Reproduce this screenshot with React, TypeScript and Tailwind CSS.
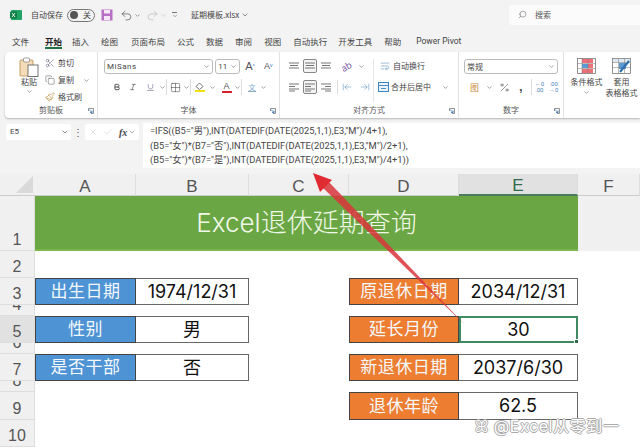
import React from "react";
import {
  Bold, Italic, Underline, ChevronDown, Undo2, Redo2, Scissors, Copy, Paintbrush, Search, X, Check,
  Grid2x2, Percent, WrapText, ArrowDownToLine,
} from "lucide-react";

const cjk = "font-['Noto_Sans_CJK_SC','Noto_Sans',sans-serif]";

const Chev = ({ className = "" }: { className?: string }) => (
  <ChevronDown size={7} strokeWidth={2} className={`text-[#666] shrink-0 ${className}`} />
);

const Launcher = () => (
  <svg width="6" height="6" viewBox="0 0 6 6" className="absolute right-[3px] bottom-[4px]">
    <path d="M.5 3V.5H5.500V5.500H3" fill="none" stroke="#777" strokeWidth=".8" />
    <path d="M1 1.500L4 4.500M4 2.500V4.500H2" fill="none" stroke="#2a6cb0" strokeWidth=".8" />
  </svg>
);

const Lines = ({ boxed = false, kind = 0 }: { boxed?: boolean; kind?: number }) => (
  <span className={`flex items-center justify-center w-[14px] h-[14px] shrink-0 ${boxed ? "border border-[#888] rounded-[2px] bg-[#f4f4f4]" : ""}`}>
    <svg width="10" height="10" viewBox="0 0 10 10">
      <path
        d={kind === 1 ? "M0 2H10M0 4.500H6M0 7H10M0 9H6" : kind === 2 ? "M0 2H10M4 4.500H10M0 7H10M4 9H10" : "M0 2H10M1 4.500H9M0 7H10"}
        stroke="#666"
        strokeWidth=".9"
      />
    </svg>
  </span>
);

const GroupLabel = ({ children }: { children: React.ReactNode }) => (
  <div className="absolute left-0 right-0 bottom-[2px] h-[12px] text-center text-[8px] leading-[12px] text-[#555]">{children}</div>
);

const Divider = () => <div className="w-px h-[16px] bg-[#ddd] shrink-0" />;

const Clipboard = () => (
  <div className="relative w-[93px] h-full shrink-0 border-r border-[#e2e2e2] flex pl-[12px] pt-[5px]">
    <div className="flex flex-col items-center w-[24px]">
      <svg width="20" height="20" viewBox="0 0 20 20">
        <rect x="1" y="3" width="13" height="16" rx="1" fill="#f4dcb8" stroke="#b98a4a" strokeWidth=".8" />
        <rect x="4.500" y="1" width="6" height="4" rx="1" fill="#fff" stroke="#888" strokeWidth=".8" />
        <rect x="9" y="8" width="10" height="11.500" fill="#fff" stroke="#666" strokeWidth=".9" />
      </svg>
      <div className="text-[8px] leading-[10px] text-[#444]">粘贴</div>
      <Chev className="mt-[1px]" />
    </div>
    <div className="flex flex-col ml-[4px] gap-[5px] text-[8px] leading-[12px] text-[#444]">
      <div className="flex items-center gap-[3px] h-[12px]"><Scissors size={10} className="text-[#557]" strokeWidth={1.200} />剪切</div>
      <div className="flex items-center gap-[3px] h-[12px]"><Copy size={10} className="text-[#555]" strokeWidth={1.200} />复制<Chev className="ml-[6px]" /></div>
      <div className="flex items-center gap-[3px] h-[12px]"><Paintbrush size={10} className="text-[#b9862f]" strokeWidth={1.400} />格式刷</div>
    </div>
    <GroupLabel>剪贴板</GroupLabel>
    <Launcher />
  </div>
);

const FontGroup = () => (
  <div className="relative w-[182px] h-full shrink-0 border-r border-[#e2e2e2] pl-[6px] pt-[7px]">
    <div className="flex items-center h-[15px] gap-[2px]">
      <div className="w-[110px] h-[15px] border border-[#bbb] rounded-[3px] flex items-center justify-between px-[2px] text-[8px] text-[#444] font-['Roboto',sans-serif] tracking-[0.5px]">MiSans<Chev /></div>
      <div className="w-[25px] h-[15px] border border-[#bbb] rounded-[3px] flex items-center justify-between px-[2px] text-[8px] text-[#444] font-['Roboto',sans-serif]">11<Chev /></div>
      <span className="ml-[3px] w-[15px] text-[11px] leading-none text-[#555] font-['Liberation_Sans',sans-serif]">A<sup className="text-[5px] text-[#2a6cb0]">^</sup></span>
      <span className="ml-[2px] w-[15px] text-[9px] leading-none text-[#555] font-['Liberation_Sans',sans-serif]">A<sup className="text-[5px] text-[#2a6cb0]">v</sup></span>
    </div>
    <div className="flex items-center h-[16px] mt-[5px] pl-[9px] text-[#555]">
      <Bold size={8} strokeWidth={3} />
      <Italic size={8} strokeWidth={2} className="ml-[8px]" />
      <span className="ml-[9px] flex items-center"><Underline size={9} strokeWidth={1.500} className="text-[#668]" /></span>
      <Chev className="ml-[4px]" />
      <Divider />
      <Grid2x2 size={11} strokeWidth={1.200} className="ml-[3px] text-[#444]" />
      <Chev className="ml-[2px]" />
      <Divider />
      <span className="ml-[3px] flex flex-col items-center w-[11px]">
        <svg width="9" height="8" viewBox="0 0 9 8"><path d="M4.500 1L8 4.500 4.500 7.500 1 4.500Z" fill="none" stroke="#666" strokeWidth=".9" /></svg>
        <span className="w-[10px] h-[2px] bg-[#f4e000]" />
      </span>
      <Chev className="ml-[4px]" />
      <span className="ml-[5px] flex flex-col items-center w-[11px]">
        <span className="text-[9px] leading-[9px] text-[#555] font-['Liberation_Sans',sans-serif]">A</span>
        <span className="w-[10px] h-[2px] bg-[#d3202a]" />
      </span>
      <Chev className="ml-[2px]" />
      <Divider />
      <span className="ml-[5px] flex flex-col items-center w-[10px] text-[7px] leading-[8px] text-[#7aa9cf]">文<span className="w-[8px] h-px bg-[#8ab]" /></span>
      <Chev className="ml-[3px]" />
    </div>
    <GroupLabel>字体</GroupLabel>
    <Launcher />
  </div>
);

const AlignGroup = () => (
  <div className="relative w-[179px] h-full shrink-0 border-r border-[#e2e2e2] pl-[7px] pt-[7px] flex">
    <div className="flex flex-col gap-[7px] w-[87px] border-r border-[#e6e6e6] h-[43px]">
      <div className="flex items-center gap-[2px] h-[14px]">
        <Lines /><Lines boxed /><Lines />
        <span className="ml-[6px] text-[9px] leading-none text-[#7a5aa6] rotate-[-30deg]">ab</span>
        <Chev className="ml-[4px]" />
      </div>
      <div className="flex items-center gap-[2px] h-[14px]">
        <Lines kind={1} /><Lines kind={1} boxed /><Lines kind={2} />
        <span className="w-px h-[14px] bg-[#ddd] mx-[2px]" />
        <ArrowDownToLine size={10} className="text-[#4c86b8] rotate-90" strokeWidth={1.200} />
        <span className="w-[4px]" />
        <ArrowDownToLine size={10} className="text-[#4c86b8] -rotate-90" strokeWidth={1.200} />
      </div>
    </div>
    <div className="flex flex-col gap-[7px] pl-[4px] text-[8px] text-[#444]">
      <div className="flex items-center gap-[3px] h-[14px]"><WrapText size={10} className="text-[#4c86b8] ml-[2px]" strokeWidth={1.300} />自动换行</div>
      <div className="flex items-center gap-[1px] h-[14px]">
        <svg width="11" height="10" viewBox="0 0 11 10"><rect x=".5" y=".5" width="10" height="9" fill="#eaf3fb" stroke="#3d85c0" /><path d="M.5 3.500H10.500M3 6.500H8" stroke="#3d85c0" strokeWidth=".9" /></svg>
        <span className="ml-[1px]">合并后居中</span><Chev className="ml-[10px]" />
      </div>
    </div>
    <GroupLabel>对齐方式</GroupLabel>
    <Launcher />
  </div>
);

const NumberGroup = () => (
  <div className="relative w-[105px] h-full shrink-0 border-r border-[#e2e2e2] pl-[5px] pt-[7px]">
    <div className="w-[94px] h-[15px] border border-[#bbb] rounded-[3px] flex items-center justify-between px-[2px] text-[8px] text-[#444]">常规<Chev /></div>
    <div className="flex items-center h-[16px] mt-[5px] pl-[6px] text-[#555]">
      <span className="text-[9px] leading-none w-[13px] text-[#c98a3a]">图</span>
      <Chev className="ml-[3px]" />
      <Percent size={11} strokeWidth={1.300} className="ml-[6px]" />
      <span className="ml-[9px] text-[13px] leading-[8px] font-bold font-['Liberation_Sans',sans-serif]">,</span>
      <span className="w-px h-[16px] bg-[#ddd] ml-[8px]" />
      <span className="ml-[3px] text-[6px] leading-[6px] text-[#4c86b8] text-center font-['Roboto',sans-serif]">←0<br />.00</span>
      <span className="ml-[5px] text-[6px] leading-[6px] text-[#4c86b8] text-center font-['Roboto',sans-serif]">.00<br />→0</span>
    </div>
    <GroupLabel>数字</GroupLabel>
    <Launcher />
  </div>
);

const StyleGroup = () => (
  <div className="flex pt-[6px] text-[8px] leading-[11px] text-[#444] text-center shrink-0">
    <div className="w-[45px] flex flex-col items-center">
      <svg width="19" height="16" viewBox="0 0 19 16">
        <rect x=".5" y=".5" width="18" height="15" fill="#fff" stroke="#777" strokeWidth=".8" />
        <rect x="5" y="1" width="11" height="4" fill="#ef6f78" />
        <rect x="5" y="6" width="6" height="4" fill="#5b9bd5" />
        <rect x="11" y="6" width="5" height="4" fill="#ef6f78" />
        <rect x="5" y="11" width="11" height="4" fill="#ef6f78" />
        <path d="M5 .5V15.500M11 .5V15.500M.5 5.500H18.500M.5 10.500H18.500" stroke="#777" strokeWidth=".5" />
      </svg>
      <div className="mt-[2px] whitespace-nowrap">条件格式</div>
      <Chev className="mt-[2px]" />
    </div>
    <div className="w-[25px] flex flex-col items-center">
      <svg width="19" height="16" viewBox="0 0 19 16">
        <rect x=".5" y=".5" width="18" height="15" fill="#fff" stroke="#777" strokeWidth=".8" />
        <rect x=".5" y=".5" width="18" height="4" fill="#dfe8f0" stroke="#777" strokeWidth=".5" />
        <rect x="7" y="5" width="7" height="6" fill="#5b9bd5" />
        <path d="M6.500 .5V15.500M12.500 .5V15.500M.5 9.500H18.500" stroke="#777" strokeWidth=".5" />
        <path d="M8 14L17 3" stroke="#2a6cb0" strokeWidth="2" />
      </svg>
      <div className="mt-[2px] whitespace-nowrap">套用</div>
      <div className="whitespace-nowrap">表格格式</div>
    </div>
  </div>
);

const cols = ["A", "B", "C", "D", "E", "F"];
const rowHeights = [1, 2, 3, 4, 5, 6, 7, 8, 9, 10];

const labelCls = "flex items-center justify-center border border-[#444] text-[#f4f8fc] text-[17px] leading-none tracking-[0.5px]";
const valueCls = "flex items-center justify-center border border-[#666] border-l-0 bg-white text-[#111] text-[18px] leading-none font-['Inter','Noto_Sans_CJK_SC',sans-serif]";

export default function App() {
  return (
    <div className={`relative w-[640px] h-[448px] overflow-hidden bg-[#f3f3f3] flex flex-col ${cjk}`}>
      {/* title bar */}
      <div className="h-[28px] flex items-center shrink-0 pl-[10px] pt-[2px] text-[#444]">
        <svg width="12" height="12" viewBox="0 0 12 12" className="shrink-0">
          <rect x="1" y="1" width="11" height="10" rx="1" fill="#21a366" />
          <rect x="0" y="2.500" width="7" height="7" rx="1" fill="#107c41" />
          <path d="M2 4L5 8M5 4L2 8" stroke="#fff" strokeWidth=".9" />
        </svg>
        <span className="ml-[9px] text-[8px] whitespace-nowrap">自动保存</span>
        <span className="ml-[4px] w-[28px] h-[13px] rounded-full border border-[#777] flex items-center justify-between px-[2px] text-[8px] leading-none">
          <span className="w-[8px] h-[8px] rounded-full bg-[#555]" />
          <span className="mr-[1px]">关</span>
        </span>
        <svg width="12" height="12" viewBox="0 0 12 12" className="ml-[6px]">
          <rect x=".5" y=".5" width="11" height="11" fill="#b86ec4" />
          <rect x="3" y="1" width="6" height="3.500" fill="#f3e6f5" />
          <rect x="3" y="7" width="6" height="4" fill="#f3e6f5" />
        </svg>
        <Undo2 size={13} strokeWidth={1.300} className="ml-[7px] text-[#555]" />
        <Chev className="ml-[1px]" />
        <Redo2 size={13} strokeWidth={1.300} className="ml-[5px] text-[#bbb]" />
        <ChevronDown size={7} className="ml-[1px] text-[#bbb]" />
        <span className="ml-[4px] flex flex-col items-center w-[7px]">
          <span className="w-[5px] h-px bg-[#777]" />
          <ChevronDown size={6} strokeWidth={2.500} className="text-[#777]" />
        </span>
        <span className="ml-[13px] text-[8px] whitespace-nowrap text-[#444]">延期模板.xlsx</span>
        <ChevronDown size={8} className="ml-[2px] text-[#555]" />
        <div className="ml-auto w-[131px] h-[20px] mt-[-1px] rounded-l-[3px] bg-[#fbfbfb] flex items-center pl-[9px] text-[8px] text-[#555]">
          <Search size={9} strokeWidth={1.300} className="-scale-x-100" />
          <span className="ml-[8px]">搜索</span>
        </div>
      </div>

      {/* tabs */}
      <div className="h-[24px] flex items-center shrink-0 pl-[12px] pt-[2px] text-[8.500px] text-[#444] whitespace-nowrap">
        <span>文件</span>
        <span className="ml-[16px] relative font-bold text-[#222]">开始<span className="absolute left-0 right-0 -bottom-[2px] h-[2px] bg-[#217346]" /></span>
        <span className="ml-[10px]">插入</span>
        <span className="ml-[12px]">绘图</span>
        <span className="ml-[13px]">页面布局</span>
        <span className="ml-[12px]">公式</span>
        <span className="ml-[12px]">数据</span>
        <span className="ml-[12px]">审阅</span>
        <span className="ml-[12px]">视图</span>
        <span className="ml-[12px]">自动执行</span>
        <span className="ml-[11px]">开发工具</span>
        <span className="ml-[12px]">帮助</span>
        <span className="ml-[15px] font-['Roboto',sans-serif]">Power Pivot</span>
      </div>

      {/* ribbon */}
      <div className="h-[66px] ml-[5px] shrink-0 bg-white rounded-l-[4px] shadow-[0_1px_2px_rgba(0,0,0,0.25)] flex overflow-hidden">
        <Clipboard />
        <FontGroup />
        <AlignGroup />
        <NumberGroup />
        <StyleGroup />
      </div>

      {/* formula bar */}
      <div className="h-[46px] mt-[5px] shrink-0 flex pl-[6px] items-start">
        <div className="w-[65px] h-[16px] mt-[1px] bg-white rounded-[2px] flex items-center justify-between pl-[4px] pr-[2px] text-[8px] text-[#444] font-['Roboto',sans-serif]">E5<ChevronDown size={8} className="text-[#555]" /></div>
        <span className="w-[14px] mt-[1px] text-center text-[10px] leading-[16px] text-[#555]">⋮</span>
        <div className="w-[54px] h-[16px] mt-[1px] bg-white rounded-[2px] flex items-center pl-[3px] text-[#bbb]">
          <X size={10} strokeWidth={1} />
          <Check size={10} strokeWidth={1} className="ml-[5px]" />
          <span className="ml-[6px] text-[10px] italic font-bold text-[#444] font-['Liberation_Serif',serif]">fx</span>
          <ChevronDown size={8} className="ml-[1px] text-[#888]" />
        </div>
        <div className="ml-[4px] flex-1 h-[45px] bg-white pl-[7px] pt-[1px] text-[9.300px] leading-[14.500px] text-[#444] font-['Roboto','Noto_Sans_CJK_SC',sans-serif] whitespace-nowrap">
          <div>{'=IFS((B5="男"),INT(DATEDIF(DATE(2025,1,1),E3,"M")/4+1),'}</div>
          <div>{'(B5="女")*(B7="否"),INT(DATEDIF(DATE(2025,1,1),E3,"M")/2+1),'}</div>
          <div>{'(B5="女")*(B7="是"),INT(DATEDIF(DATE(2025,1,1),E3,"M")/4+1))'}</div>
        </div>
      </div>

      {/* sheet */}
      <div className="relative mt-[5px] flex-1 grid grid-cols-[35px_101px_113px_100px_110px_119px_62px] grid-rows-[22px_55px_27px_27px_11px_27px_11px_27px_11px_28px_27px] bg-white font-['Inter','Noto_Sans_CJK_SC',sans-serif]">
        <div className="bg-[#f0f0f0] flex items-end justify-end border-b border-[#ccc] pr-[2px] pb-[2px]">
          <svg width="17" height="17" viewBox="0 0 17 17"><path d="M17 0V17H0Z" fill="#d9d9d9" /></svg>
        </div>
        {cols.map((c) => (
          <div key={c} className={`flex items-center justify-center pt-[3px] text-[17px] leading-none font-['Liberation_Sans',sans-serif] border-r border-[#ddd] ${c === "E" ? "bg-[#e1e1e1] text-[#2f6b4a] border-b-2 border-b-[#4a7a5a]" : "bg-[#f0f0f0] text-[#555] border-b border-b-[#ccc]"}`}>{c}</div>
        ))}
        <div className="bg-[#f0f0f0]" />

        {rowHeights.map((r) => (
          <div
            key={r}
            style={{ gridColumn: 1, gridRow: r + 1 }}
            className={`flex items-end justify-center overflow-hidden pb-[2px] border-b border-r border-[#ddd] text-[16px] leading-none font-['Liberation_Sans',sans-serif] text-[#555] ${r === 5 ? "bg-[#e1e1e1]" : "bg-[#f0f0f0]"}`}
          >
            {r}
          </div>
        ))}

        <div className="col-start-2 col-end-7 row-start-2 row-end-3 bg-[#6aa744] flex items-center justify-center text-[26px] leading-none text-[#f1f8e9] border-b-2 border-b-[#7ab648]">
          <span className="font-light">Excel退休延期查询</span>
        </div>

        <div className={`col-start-2 row-start-4 bg-[#4e93d3] ${labelCls}`}>出生日期</div>
        <div className={`col-start-3 row-start-4 ${valueCls}`}>1974/12/31</div>
        <div className={`col-start-2 row-start-6 bg-[#4e93d3] ${labelCls}`}>性别</div>
        <div className={`col-start-3 row-start-6 ${valueCls}`}>男</div>
        <div className={`col-start-2 row-start-8 bg-[#4e93d3] ${labelCls}`}>是否干部</div>
        <div className={`col-start-3 row-start-8 ${valueCls}`}>否</div>

        <div className={`col-start-5 row-start-4 bg-[#ed7d31] ${labelCls}`}>原退休日期</div>
        <div className={`col-start-6 row-start-4 ${valueCls}`}>2034/12/31</div>
        <div className={`col-start-5 row-start-6 bg-[#ed7d31] ${labelCls}`}>延长月份</div>
        <div className="col-start-6 row-start-6 relative flex items-center justify-center border-2 border-[#3f8a62] bg-white text-[#111] text-[18px] leading-none">
          30
          <span className="absolute -right-[3px] -bottom-[3px] w-[5px] h-[5px] bg-[#2f6b4a] border border-white" />
        </div>
        <div className={`col-start-5 row-start-8 bg-[#ed7d31] ${labelCls}`}>新退休日期</div>
        <div className={`col-start-6 row-start-8 ${valueCls}`}>2037/6/30</div>
        <div className={`col-start-5 row-start-10 bg-[#ed7d31] ${labelCls}`}>退休年龄</div>
        <div className={`col-start-6 row-start-10 ${valueCls}`}>62.5</div>

        {/* watermark */}
        <div className="absolute left-[475px] top-[243px] text-[16px] leading-[18px] tracking-[0.6px] text-white whitespace-nowrap [text-shadow:1px_0_0_#aaa,-1px_0_0_#aaa,0_1px_0_#aaa,0_-1px_0_#aaa]">
          ꕤ @Excel从零到一
        </div>
      </div>

      {/* annotation arrow */}
      <svg width="640" height="448" viewBox="0 0 640 448" className="absolute left-0 top-0 pointer-events-none">
        <polygon points="465,325 321,186 327,180" fill="#d9353b" opacity=".85" />
        <polygon points="313,173 332,180 320,192" fill="#e02b33" />
      </svg>
    </div>
  );
}
